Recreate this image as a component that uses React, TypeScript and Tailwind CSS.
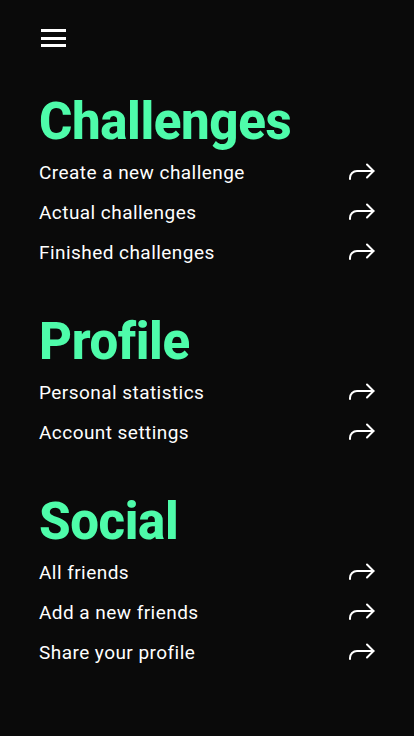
import React from 'react';

const SECTIONS = [
    { title: 'Challenges', items: ['Create a new challenge', 'Actual challenges', 'Finished challenges'] },
    { title: 'Profile', items: ['Personal statistics', 'Account settings'] },
    { title: 'Social', items: ['All friends', 'Add a new friends', 'Share your profile'] },
];

// curved "forward" arrow shown at the end of each row
function ForwardArrow() {
    return (
        <svg width="28" height="20" viewBox="0 0 28 20" fill="none" stroke="currentColor" strokeWidth="2" strokeLinecap="round" strokeLinejoin="round">
            <path d="M20 1.5 L26.5 8 L20 14.5" />
            <path d="M3 16 V15 a7 7 0 0 1 7-7 H26.5" />
        </svg>
    );
}

export default function App() {
    return (
        <div className="min-h-[736px] bg-[#0a0a0a] text-white font-['Roboto',sans-serif] px-[39px] pt-[29px] pb-10">
            {/* Menu button */}
            <button className="flex flex-col gap-[4.5px] w-[25px] ml-[2px]">
                <span className="block h-[3px] w-full bg-white" />
                <span className="block h-[3px] w-full bg-white" />
                <span className="block h-[3px] w-full bg-white" />
            </button>

            <div className="mt-[44px] flex flex-col gap-[38px]">
                {SECTIONS.map((section) => (
                    <section key={section.title}>
                        <h2 className="text-[51px] leading-[62px] font-extrabold text-[#4efcaa] tracking-[-0.4px]">
                            {section.title}
                        </h2>
                        <ul>
                            {section.items.map((item) => (
                                <li key={item} className="flex items-center justify-between h-[40px] text-[19px] tracking-[0.45px]">
                                    <span>{item}</span>
                                    <span className="text-white"><ForwardArrow /></span>
                                </li>
                            ))}
                        </ul>
                    </section>
                ))}
            </div>
        </div>
    );
}
